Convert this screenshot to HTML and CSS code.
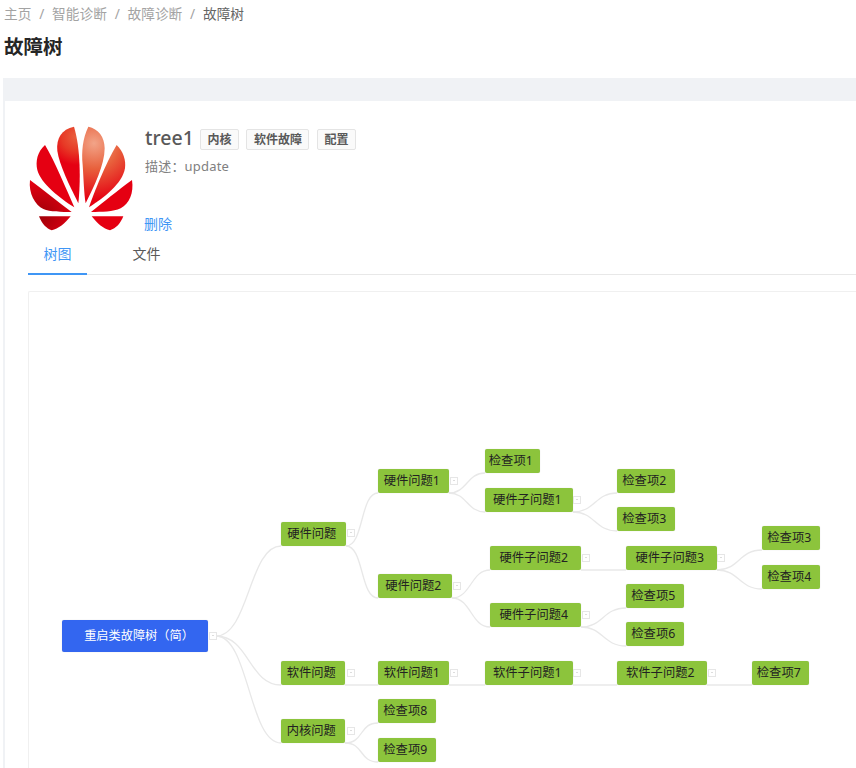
FILE: index.html
```html
<!DOCTYPE html>
<html lang="zh-CN">
<head>
    <meta charset="UTF-8">
    <title>故障树</title>
    <link rel="stylesheet" href="styles.css">
</head>
<body>
    <div class="page-header">
        <div class="breadcrumb">
            <span>主页</span><i>/</i><span>智能诊断</span><i>/</i><span>故障诊断</span><i>/</i><span class="current">故障树</span>
        </div>
        <h1 class="page-title">故障树</h1>
    </div>

    <div class="content">
        <div class="card">
            <div class="info">
                <svg class="logo" viewBox="0 0 375 375" role="img" aria-label="logo">
                    <defs>
                        <radialGradient id="petalLeft" gradientUnits="userSpaceOnUse" cx="168" cy="65" r="85">
                            <stop offset="0" stop-color="#e95f3e"/>
                            <stop offset="0.5" stop-color="#e73a26"/>
                            <stop offset="1" stop-color="#e50012"/>
                        </radialGradient>
                        <radialGradient id="petalTop" gradientUnits="userSpaceOnUse" cx="222" cy="85" r="170">
                            <stop offset="0" stop-color="#f2a488"/>
                            <stop offset="0.45" stop-color="#e8603c"/>
                            <stop offset="1" stop-color="#e50012"/>
                        </radialGradient>
                        <radialGradient id="petalDark" gradientUnits="userSpaceOnUse" cx="65" cy="300" r="105">
                            <stop offset="0" stop-color="#a00008"/>
                            <stop offset="1" stop-color="#e50012"/>
                        </radialGradient>
                    </defs>
                    <path fill="url(#petalLeft)" d="M162 35C125 42 108 70 112 108C118 150 150 215 175 265C182 200 182 100 162 35Z"/>
                    <path fill="url(#petalTop)" d="M205 35C188 70 184 110 188 150C191 195 192 235 197 265C222 215 254 150 254 100C254 65 235 42 205 35Z"/>
                    <path fill="#e50012" d="M75 90C52 110 46 140 52 165C62 205 120 250 163 277C140 225 105 140 75 90Z"/>
                    <path fill="url(#petalTop)" d="M290 90C265 130 228 215 207 277C250 250 308 205 315 160C318 135 310 110 290 90Z"/>
                    <path fill="url(#petalDark)" d="M30 195C25 235 45 270 70 282C90 291 125 291 155 291C115 262 70 225 30 195Z"/>
                    <path fill="#e50012" d="M336 195C295 225 250 262 213 291C245 291 280 291 302 280C328 265 342 235 336 195Z"/>
                    <path fill="url(#petalDark)" d="M57 304H152C135 325 115 342 95 346C80 342 65 325 57 304Z"/>
                    <path fill="#e50012" d="M215 304H310C302 325 288 340 270 346C250 342 232 325 215 304Z"/>
                </svg>
                <div class="meta">
                    <div class="name-row">
                        <span class="name">tree1</span>
                        <span class="tag">内核</span>
                        <span class="tag">软件故障</span>
                        <span class="tag">配置</span>
                    </div>
                    <div class="desc">描述：update</div>
                    <a class="del" href="#">删除</a>
                </div>
            </div>

            <div class="tabs">
                <span class="tab active">树图</span>
                <span class="tab">文件</span>
            </div>

            <div class="graph">
                <div class="canvas">
                    <!-- canvas origin is at 29,292 of the page -->
                    <svg class="lines" width="830" height="480" fill="none" stroke="#e8e8e8" stroke-width="1.3">
                        <path d="M187 344C220 344 220 254 252 254"/>
                        <path d="M187 344C220 344 220 393 252 393"/>
                        <path d="M187 344C220 344 220 451 252 451"/>
                        <path d="M317 254C335 254 331 201 349 201"/>
                        <path d="M317 254C335 254 331 306 349 306"/>
                        <path d="M316 393H349"/>
                        <path d="M316 451C335 451 330 431 349 431"/>
                        <path d="M316 451C335 451 330 470 349 470"/>
                        <path d="M420 201C438 201 438 181 456 181"/>
                        <path d="M420 201C438 201 438 220 456 220"/>
                        <path d="M423 306C442 306 442 278 461 278"/>
                        <path d="M423 306C442 306 442 335 461 335"/>
                        <path d="M420 393H456"/>
                        <path d="M544 220C566 220 566 201 588 201"/>
                        <path d="M544 220C566 220 566 239 588 239"/>
                        <path d="M552 278H597"/>
                        <path d="M552 335C574 335 574 316 597 316"/>
                        <path d="M552 335C574 335 574 354 597 354"/>
                        <path d="M544 393H588"/>
                        <path d="M688 278C710 278 710 258 733 258"/>
                        <path d="M688 278C710 278 710 297 733 297"/>
                        <path d="M678 393H723"/>
                    </svg>

                    <div class="node root" style="left:33px;top:328px;width:146px;height:32px">重启类故障树（简）</div>
                    <span class="fold" style="left:180px;top:340px"></span>

                    <div class="node" style="left:252px;top:230px;width:65px">硬件问题</div>
                    <span class="fold" style="left:318px;top:237px"></span>
                    <div class="node" style="left:252px;top:369px;width:64px">软件问题</div>
                    <span class="fold" style="left:318px;top:377px"></span>
                    <div class="node" style="left:252px;top:427px;width:64px">内核问题</div>
                    <span class="fold" style="left:318px;top:435px"></span>

                    <div class="node" style="left:349px;top:177px;width:71px">硬件问题1</div>
                    <span class="fold" style="left:421px;top:185px"></span>
                    <div class="node" style="left:349px;top:282px;width:74px">硬件问题2</div>
                    <span class="fold" style="left:424px;top:290px"></span>
                    <div class="node" style="left:349px;top:369px;width:71px">软件问题1</div>
                    <span class="fold" style="left:421px;top:377px"></span>
                    <div class="node" style="left:349px;top:407px;width:58px">检查项8</div>
                    <div class="node" style="left:349px;top:446px;width:58px">检查项9</div>

                    <div class="node" style="left:456px;top:157px;width:55px">检查项1</div>
                    <div class="node" style="left:456px;top:196px;width:88px">硬件子问题1</div>
                    <span class="fold" style="left:544px;top:204px"></span>
                    <div class="node" style="left:461px;top:254px;width:91px">硬件子问题2</div>
                    <span class="fold" style="left:553px;top:262px"></span>
                    <div class="node" style="left:461px;top:311px;width:91px">硬件子问题4</div>
                    <span class="fold" style="left:553px;top:319px"></span>
                    <div class="node" style="left:456px;top:369px;width:88px">软件子问题1</div>
                    <span class="fold" style="left:544px;top:377px"></span>

                    <div class="node" style="left:588px;top:177px;width:58px">检查项2</div>
                    <div class="node" style="left:588px;top:215px;width:58px">检查项3</div>
                    <div class="node" style="left:597px;top:254px;width:91px">硬件子问题3</div>
                    <span class="fold" style="left:688px;top:262px"></span>
                    <div class="node" style="left:597px;top:292px;width:58px">检查项5</div>
                    <div class="node" style="left:597px;top:330px;width:58px">检查项6</div>
                    <div class="node" style="left:588px;top:369px;width:90px">软件子问题2</div>
                    <span class="fold" style="left:679px;top:377px"></span>

                    <div class="node" style="left:733px;top:234px;width:58px">检查项3</div>
                    <div class="node" style="left:733px;top:273px;width:58px">检查项4</div>
                    <div class="node" style="left:723px;top:369px;width:57px">检查项7</div>
                </div>
            </div>
        </div>
    </div>
</body>
</html>
```

FILE: styles.css
```css
* {
    margin: 0;
    padding: 0;
    box-sizing: border-box;
}

html, body {
    height: 768px;
    overflow: hidden;
}

body {
    background: #fff;
    font-family: "Noto Sans", "Noto Sans CJK SC", sans-serif;
    font-size: 14px;
    color: #595959;
}

.page-header {
    height: 78px;
    padding: 3px 0 0 4px;
}

.breadcrumb {
    display: flex;
    align-items: center;
    height: 20px;
    font-size: 13.7px;
    color: #a3a3a3;
}

.breadcrumb i {
    font-style: normal;
    margin: 0 7.8px;
}

.breadcrumb .current {
    color: #666;
}

.page-title {
    margin-top: 12px;
    font-size: 19.5px;
    line-height: 24px;
    font-weight: 700;
    color: #262626;
}

.content {
    height: 690px;
    margin-left: 3px;
    padding: 23px 0 0 2px;
    background: #f0f2f5;
}

.card {
    height: 667px;
    padding: 24px 0 0 23px;
    background: #fff;
}

.info {
    display: flex;
    height: 110px;
}

.logo {
    width: 125px;
    height: 125px;
    margin: -10px 0 0 -8px;
    flex: none;
}

.meta {
    display: flex;
    flex-direction: column;
}

.name-row {
    display: flex;
    align-items: center;
    height: 26px;
}

.name {
    margin: -2px 6px 0 0;
    font-size: 19.5px;
    font-weight: 500;
    color: #595959;
}

.tag {
    height: 21px;
    margin: 3px 7.5px 0 0;
    padding: 0 6.5px;
    font-size: 12px;
    line-height: 20px;
    font-weight: 700;
    color: #595959;
    background: #fafafa;
    border: 1px solid #e4e4e4;
    border-radius: 2px;
}

.desc {
    margin-top: 3px;
    font-size: 13px;
    line-height: 24px;
    letter-spacing: 0.2px;
    color: #808080;
}

.del {
    margin: auto 0 1px -1px;
    font-size: 14px;
    line-height: 20px;
    color: #3f96f5;
    text-decoration: none;
}

.tabs {
    display: flex;
    height: 35px;
    margin-top: 5px;
    border-bottom: 1px solid #e8e8e8;
}

.tab {
    width: 59px;
    margin-right: 30px;
    padding-top: 2px;
    text-align: center;
    line-height: 24px;
    color: #595959;
}

.tab.active {
    height: 35px;
    color: #3f96f5;
    border-bottom: 2px solid #3f96f5;
}

.graph {
    height: 500px;
    margin-top: 16px;
    border: 1px solid #f0f0f0;
    border-right: 0;
    border-bottom: 0;
    border-top-left-radius: 2px;
}

.canvas {
    position: relative;
    height: 100%;
}

.lines {
    position: absolute;
    left: 0;
    top: 0;
}

.node {
    position: absolute;
    height: 24px;
    padding-right: 3.5px;
    text-align: center;
    font-size: 12.3px;
    line-height: 23px;
    white-space: nowrap;
    color: #222;
    background: #8cc43c;
    border-radius: 2px;
    box-shadow: 0 0 1px rgba(0, 0, 0, 0.2);
}

.node.root {
    padding: 0 0 0 8px;
    font-size: 12.2px;
    line-height: 31px;
    color: #fff;
    background: #3366f0;
}

.fold {
    position: absolute;
    width: 8px;
    height: 8px;
    background: #fff;
    border: 1px solid #e6e6e6;
}

.fold::after {
    content: '';
    position: absolute;
    left: 2px;
    top: 2px;
    width: 2px;
    height: 1px;
    background: #ddd;
}
```
